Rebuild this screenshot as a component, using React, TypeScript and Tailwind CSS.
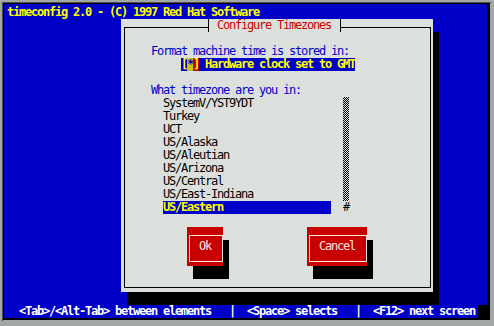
const mono = "font-['DejaVu_Sans_Mono',monospace] text-[12px] leading-[13px] tracking-[-1.2246px] whitespace-pre"

const ZONES = [
  'SystemV/YST9YDT',
  'Turkey',
  'UCT',
  'US/Alaska',
  'US/Aleutian',
  'US/Arizona',
  'US/Central',
  'US/East-Indiana',
  'US/Eastern'
]

function Button({ label, width, gap }: { label: string; width: string; gap: string }) {
  return (
    <div className={`h-[39px] ${width} ${gap} bg-[#c80000] shadow-[6px_13px_0_#000] pl-[2px] pt-[8px]`}>
      <div className="h-[27px] w-full border border-[#ffe4e4] pl-[9px] pt-[4px] text-[#ffe4e4]">{label}</div>
    </div>
  )
}

export default function App() {
  return (
    <div className={`w-[494px] h-[326px] bg-[#a4a8a4] pl-[2px] pt-[2px] ${mono}`}>
      <div className="w-[489px] h-[319px] border-l border-t border-[#4c504c]">
        <div className="w-[487px] h-[317px] bg-black pl-[1px] pt-[1px]">
          <div className="w-[483px] h-[314px] bg-[#0000c8] pl-[3px] pt-[2px] flex flex-col">
            {/* root title */}
            <div className="h-[13px] text-[#ffff00] font-bold">timeconfig 2.0 - (C) 1997 Red Hat Software</div>

            {/* desktop */}
            <div className="h-[286px]">
              <div className="relative ml-[114px] w-[312px] h-[273px] bg-[#dce0dc] shadow-[6px_13px_0_#000] pl-[3px] pt-[8px]">
                <div className="w-[307px] h-[261px] border border-black pt-[17px] flex flex-col">
                  <div className="h-[13px] ml-[26px] text-[#0000c8]">Format machine time is stored in:</div>
                  <div className="h-[13px] ml-[56px] w-[174px] flex bg-[#0000c8] text-[#ffff00] font-bold">
                    <span>[</span>
                    <span className="bg-[#c8c800] text-[#0000c8]">*</span>
                    <span className="bg-[#c80000]">]</span>
                    <span> Hardware clock set to GMT</span>
                  </div>
                  <div className="h-[13px]" />
                  <div className="h-[13px] ml-[26px] text-[#0000c8]">What timezone are you in:</div>
                  <div className="ml-[38px] flex">
                    <div className="w-[168px] flex flex-col">
                      {ZONES.map((z, i) =>
                        i === ZONES.length - 1 ? (
                          <div key={z} className="h-[13px] bg-[#0000c8] text-[#ffff00] font-bold">{z}</div>
                        ) : (
                          <div key={z} className="h-[13px] text-black">{z}</div>
                        )
                      )}
                    </div>
                    <div className="ml-[12px] w-[6px] flex flex-col">
                      <div className="h-[104px] bg-[image:repeating-conic-gradient(#000_0_25%,#dce0dc_0_50%)] bg-[length:2px_2px]" />
                      <div className="h-[13px] text-black">#</div>
                    </div>
                  </div>
                  <div className="h-[13px]" />
                  <div className="flex ml-[62px]">
                    <Button label="Ok" width="w-[36px]" gap="" />
                    <Button label="Cancel" width="w-[60px]" gap="ml-[84px]" />
                  </div>
                </div>
                <div className="absolute left-[87px] top-0 w-[133px] h-[13px] bg-[#dce0dc] border-x border-black pl-[8px] text-[#c80000]">
                  Configure Timezones
                </div>
              </div>
            </div>

            {/* help line */}
            <div className="h-[13px] flex">
              <div className="w-[474px] -ml-[3px] pl-[3px] bg-[#0000c8] text-white font-bold">
                {'  <Tab>/<Alt-Tab> between elements   |  <Space> selects   |  <F12> next screen'}
              </div>
              <div className="w-[9px] bg-black" />
            </div>
          </div>
        </div>
      </div>
    </div>
  )
}
